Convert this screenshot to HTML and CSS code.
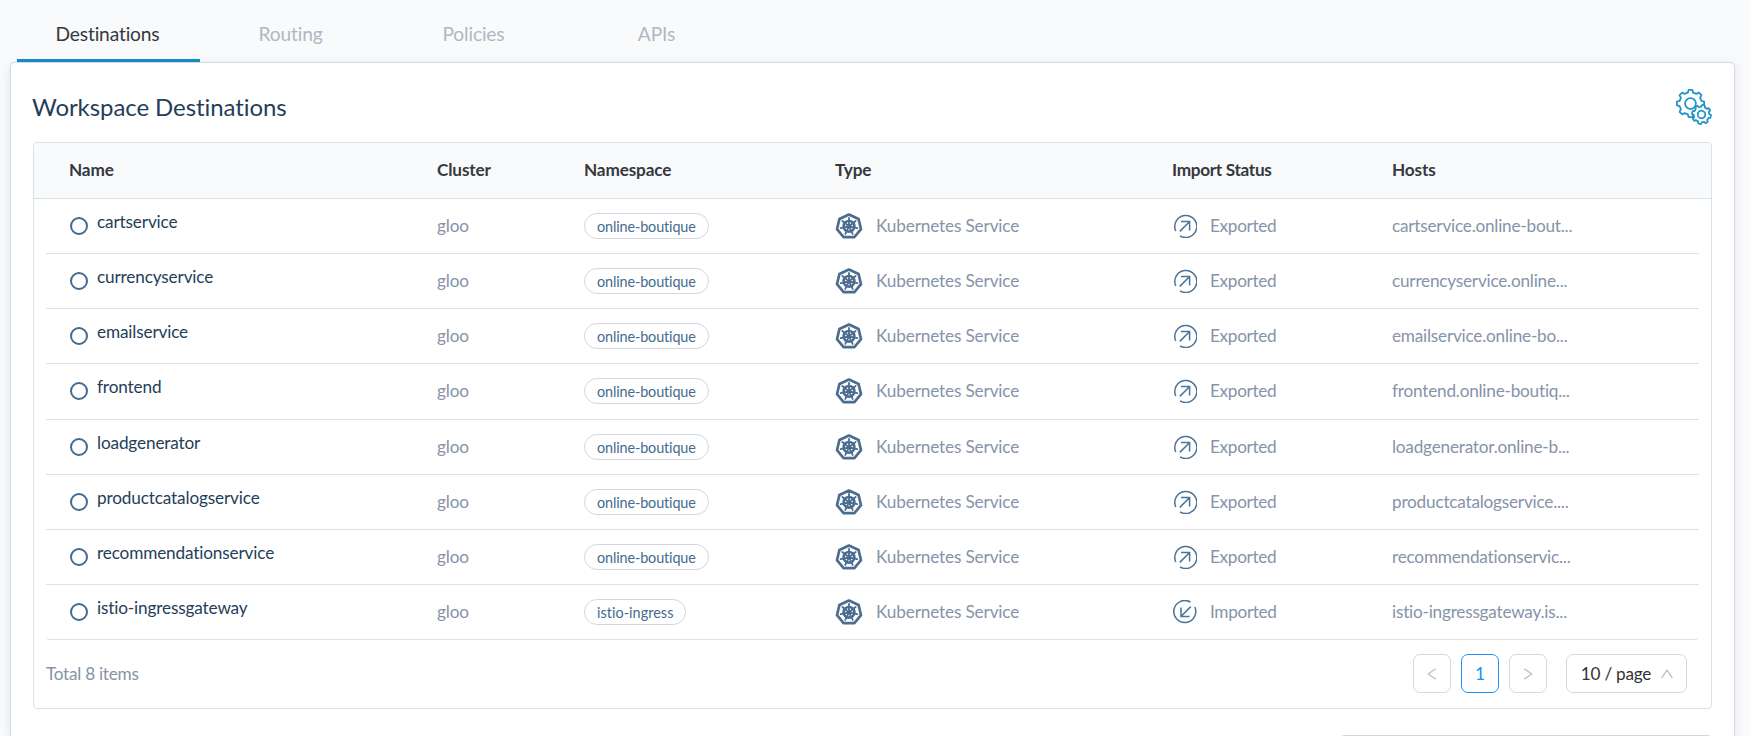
FILE: index.html
```html
<!DOCTYPE html>
<html lang="en">
<head>
<meta charset="utf-8">
<title>Workspace Destinations</title>
<link rel="stylesheet" href="styles.css">
</head>
<body>
<svg class="defs" width="0" height="0" aria-hidden="true">
  <symbol id="k8s" viewBox="0 0 28 26">
    <path d="M14 1.600 23.600 6 26 16.200 19.400 24.200H8.600L2 16.200 4.400 6Z" fill="none" stroke="currentColor" stroke-width="2.700" stroke-linejoin="round"/>
    <circle cx="14" cy="13.300" r="5.300" fill="none" stroke="currentColor" stroke-width="2.700"/>
    <g stroke="currentColor" stroke-width="1.800" stroke-linecap="round">
      <path d="M14 13.300V4.800M14 13.300 20.650 8M14 13.300 22.290 15.190M14 13.300 17.690 20.960M14 13.300 10.310 20.960M14 13.300 5.710 15.190M14 13.300 7.350 8"/>
    </g>
    <circle cx="14" cy="13.300" r="2" fill="currentColor"/>
  </symbol>
  <symbol id="export" viewBox="0 0 24 24">
    <path d="M2.800 17A11 11 0 1 1 7 21.800M6.800 17.400 16.400 7.800M8 7.600H16.600V16.600" fill="none" stroke="currentColor" stroke-width="1.500"/>
  </symbol>
  <symbol id="import" viewBox="0 0 24 24">
    <path d="M21.800 7A11 11 0 1 1 17.600 2.200M17.800 6.600 8.200 16.200M16.600 16.400H8V7.400" fill="none" stroke="currentColor" stroke-width="1.500"/>
  </symbol>
  <symbol id="gear" viewBox="-15 -15 30 30">
    <path d="M-2.600-10.900-1.900-13.600H1.900L2.600-10.900 5.870-9.550 8.270-10.960 10.960-8.270 9.550-5.870 10.900-2.600 13.600-1.900V1.900L10.900 2.600 9.550 5.870 10.960 8.270 8.270 10.960 5.870 9.550 2.600 10.900 1.900 13.600H-1.900L-2.600 10.900-5.870 9.550-8.270 10.960-10.960 8.270-9.550 5.870-10.900 2.600-13.600 1.900V-1.900L-10.900-2.600-9.550-5.870-10.960-8.270-8.270-10.960-5.870-9.550Z" fill="#fff" stroke="currentColor" vector-effect="non-scaling-stroke" stroke-width="1.800" stroke-linejoin="round"/>
    <circle r="5.400" fill="none" stroke="currentColor" vector-effect="non-scaling-stroke" stroke-width="1.800"/>
  </symbol>
</svg>

<nav class="tabs">
  <a class="tab active">Destinations</a>
  <a class="tab">Routing</a>
  <a class="tab">Policies</a>
  <a class="tab">APIs</a>
</nav>

<main class="card">
  <header class="card-head">
    <h1>Workspace Destinations</h1>
    <svg class="gears" viewBox="0 0 36 36">
      <use href="#gear" x="-.500" y="-.500" width="30" height="30"/>
      <g transform="rotate(12 25.500 25.500)"><use href="#gear" x="15" y="15" width="21" height="21"/></g>
    </svg>
  </header>

  <section class="table">
    <div class="grid thead"><span>Name</span><span>Cluster</span><span>Namespace</span><span>Type</span><span class="tight">Import Status</span><span>Hosts</span></div>
    <div class="tbody" id="rows"></div>
    <footer class="foot">
      <span class="total">Total 8 items</span>
      <div class="pager">
        <span class="btn"><svg viewBox="0 0 10 12"><path d="M8.800.800 1.200 6l7.600 5.200"/></svg></span>
        <span class="btn current">1</span>
        <span class="btn"><svg viewBox="0 0 10 12"><path d="M1.200.800 8.800 6 1.200 11.200"/></svg></span>
        <span class="select"><span>10 / page</span><svg viewBox="0 0 12 10"><path d="M.600 9.200 6 1.200l5.400 8"/></svg></span>
      </div>
    </footer>
  </section>
  <div class="next-panel"></div>
</main>
<script src="rows.js"></script>
</body>
</html>
```
FILE: rows.js
```js
const rows = [
  ["cartservice", "online-boutique", "Exported", "cartservice.online-bout..."],
  ["currencyservice", "online-boutique", "Exported", "currencyservice.online..."],
  ["emailservice", "online-boutique", "Exported", "emailservice.online-bo..."],
  ["frontend", "online-boutique", "Exported", "frontend.online-boutiq..."],
  ["loadgenerator", "online-boutique", "Exported", "loadgenerator.online-b..."],
  ["productcatalogservice", "online-boutique", "Exported", "productcatalogservice...."],
  ["recommendationservice", "online-boutique", "Exported", "recommendationservic..."],
  ["istio-ingressgateway", "istio-ingress", "Imported", "istio-ingressgateway.is..."]
];
document.getElementById("rows").innerHTML = rows.map(([name, ns, status, host]) => `
  <div class="grid row">
    <span class="name"><i class="ring"></i><span class="link">${name}</span></span>
    <span class="cluster">gloo</span>
    <span class="ns"><span class="chip ${ns}">${ns}</span></span>
    <span class="type"><svg><use href="#k8s"/></svg>Kubernetes Service</span>
    <span class="status"><svg><use href="#${status === "Exported" ? "export" : "import"}"/></svg>${status}</span>
    <span class="host">${host}</span>
  </div>`).join("");
```
FILE: styles.css
```css
* { box-sizing: border-box; }
body {
  margin: 0;
  height: 736px;
  overflow: hidden;
  background: #f9fafc;
  color: #8693a8;
  font: 17.200px/24px Lato, "Open Sans", sans-serif;
  letter-spacing: -.150px;
  font-variant-ligatures: none;
}
.defs { display: block; height: 0; }
.tabs { display: flex; height: 62px; padding-left: 17px; }
.tab { width: 183px; padding: 22px 2px 0 0; text-align: center; font-size: 19.200px; color: #b1b7c0; }
.tab.active { color: #35393d; border-bottom: 3px solid #158ac5; }
.card {
  margin: 0 15px 0 10px;
  height: 674px;
  padding: 0 22px;
  overflow: hidden;
  background: #fff;
  border: 1px solid #d4dae1;
  border-bottom: 0;
  border-radius: 5px 5px 0 0;
  box-shadow: 0 2px 10px rgba(60, 75, 95, .12);
}
.card-head { display: flex; justify-content: space-between; height: 79px; }
h1 { margin: 29px 0 0 -1px; font-size: 24px; line-height: 30px; font-weight: 400; letter-spacing: -.080px; color: #253e58; }
.gears { width: 36px; height: 36px; margin-top: 26px; color: #2196c9; overflow: visible; }
.table { height: 567px; border: 1px solid #d9e1e9; border-radius: 4px; overflow: hidden; }
.grid { display: grid; grid-template-columns: 368px 147px 251px 337px 220px 1fr; align-items: center; }
.thead { height: 56px; padding: 0 0 2px 35px; background: #f9fafc; border-bottom: 1px solid #d9e1e9; font-weight: 700; color: #35393d; }
.thead .tight { letter-spacing: -.320px; }
.tbody { padding: 0 12px; }
.row { height: 55.150px; padding-left: 23px; border-bottom: 1px solid #d9e1e9; }
.row:last-child { border-radius: 0 0 4px 4px; }
.name, .type, .status, .ns { display: flex; align-items: center; }
.ring { width: 18px; height: 18px; margin-left: 1px; border: 2px solid #456b90; border-radius: 50%; }
.link { margin: -8px 0 0 9px; color: #253e58; }
.chip { height: 26px; padding: 0 12px; border: 1px solid #d4d7e0; border-radius: 13px; font-size: 14.400px; line-height: 25px; letter-spacing: -.120px; color: #456b90; }
.chip.istio-ingress { letter-spacing: .050px; }
.type svg { width: 28px; height: 26px; margin-right: 13px; color: #4b6d8f; }
.status { letter-spacing: -.330px; }
.status svg { width: 24px; height: 24px; margin: 0 13px 0 1px; color: #4b7397; }
.host { letter-spacing: -.220px; }
.foot { display: flex; justify-content: space-between; align-items: center; height: 67px; padding: 0 24px 0 12px; }
.total { letter-spacing: -.270px; }
.pager { display: flex; gap: 10px; }
.btn, .select { display: flex; align-items: center; justify-content: center; height: 39px; border: 1px solid #d9d9d9; border-radius: 7px; }
.btn { width: 38px; }
.current { border-color: #1890ff; color: #1890ff; }
.select { width: 121px; margin-left: 9px; padding-left: 1px; gap: 10px; letter-spacing: -.250px; color: #333; }
.pager svg { width: 10px; height: 12px; fill: none; stroke: #bfbfbf; stroke-width: 1.300; }
.pager .select svg { width: 12px; height: 10px; }
.next-panel { width: 372px; height: 60px; margin: 26px 0 0 auto; border: 1px solid #d5d7da; border-radius: 4px; }
```
